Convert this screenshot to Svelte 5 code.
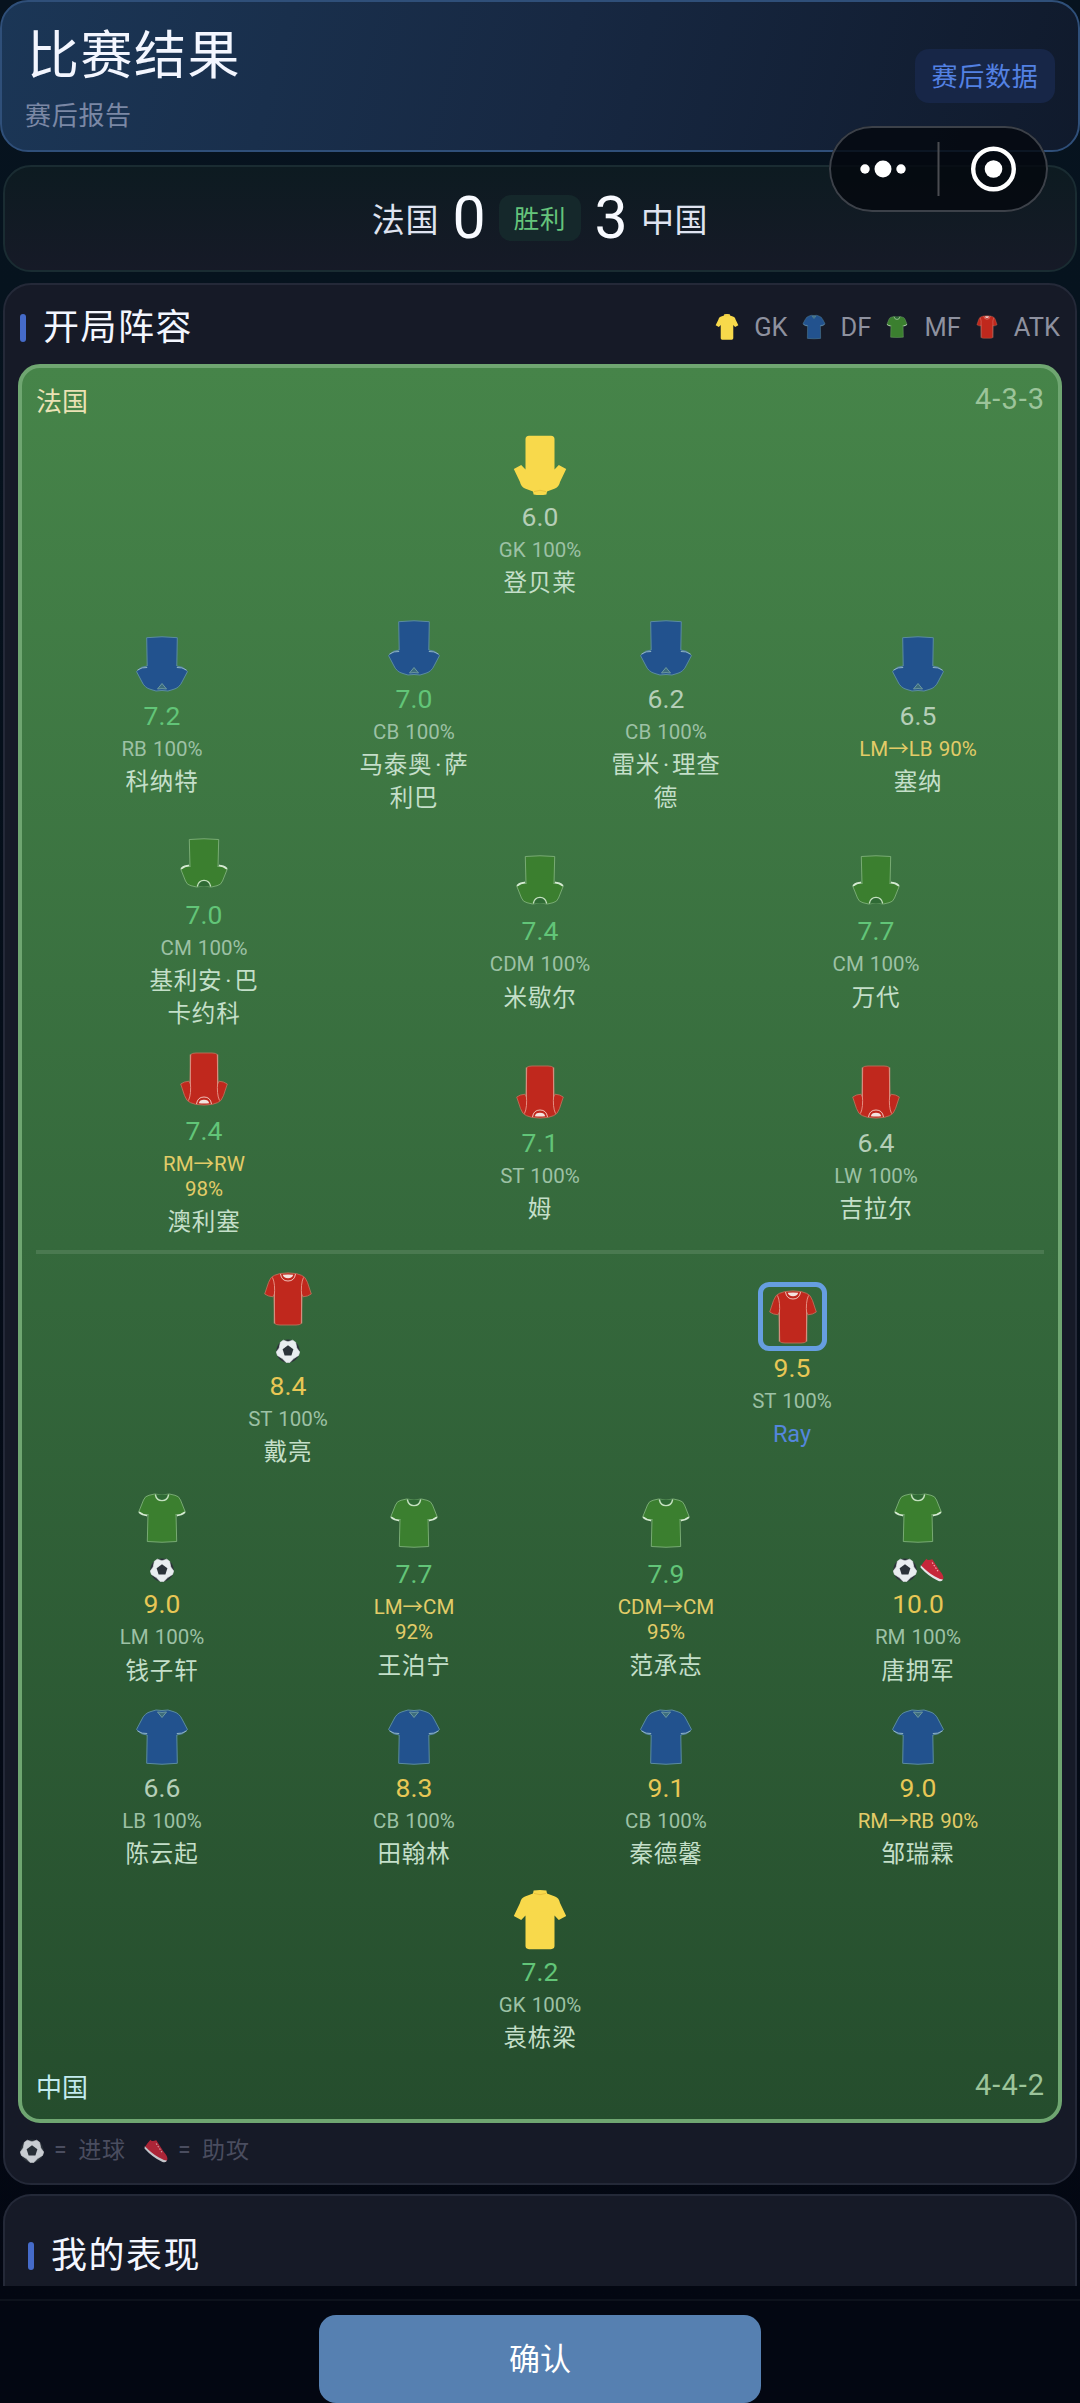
<script>
  const legend = [
    { kind: 'gk', label: 'GK' },
    { kind: 'df', label: 'DF' },
    { kind: 'mf', label: 'MF' },
    { kind: 'atk', label: 'ATK' }
  ];

  const p = (kind, score, pos, name, extra = {}) => ({ kind, score, pos: [].concat(pos), name: [].concat(name), ...extra });

  const away = [
    [p('gk', '6.0', 'GK 100%', '登贝莱')],
    [
      p('df', '7.2', 'RB 100%', '科纳特'),
      p('df', '7.0', 'CB 100%', ['马泰奥·萨', '利巴']),
      p('df', '6.2', 'CB 100%', ['雷米·理查', '德']),
      p('df', '6.5', 'LM→LB 90%', '塞纳')
    ],
    [
      p('mf', '7.0', 'CM 100%', ['基利安·巴', '卡约科']),
      p('mf', '7.4', 'CDM 100%', '米歇尔'),
      p('mf', '7.7', 'CM 100%', '万代')
    ],
    [
      p('atk', '7.4', ['RM→RW', '98%'], '澳利塞'),
      p('atk', '7.1', 'ST 100%', '姆'),
      p('atk', '6.4', 'LW 100%', '吉拉尔')
    ]
  ];

  const home = [
    [
      p('atk', '8.4', 'ST 100%', '戴亮', { events: ['goal'] }),
      p('atk', '9.5', 'ST 100%', 'Ray', { me: true })
    ],
    [
      p('mf', '9.0', 'LM 100%', '钱子轩', { events: ['goal'] }),
      p('mf', '7.7', ['LM→CM', '92%'], '王泊宁'),
      p('mf', '7.9', ['CDM→CM', '95%'], '范承志'),
      p('mf', '10.0', 'RM 100%', '唐拥军', { events: ['goal', 'assist'] })
    ],
    [
      p('df', '6.6', 'LB 100%', '陈云起'),
      p('df', '8.3', 'CB 100%', '田翰林'),
      p('df', '9.1', 'CB 100%', '秦德馨'),
      p('df', '9.0', 'RM→RB 90%', '邹瑞霖')
    ],
    [p('gk', '7.2', 'GK 100%', '袁栋梁')]
  ];

  const tone = (s) => (+s >= 8 ? 'gold' : +s >= 7 ? 'good' : 'plain');
  const moved = (pl) => pl.pos[0].includes('→');
</script>

{#snippet shirt(kind, flip)}
  <svg class="shirt" class:flip viewBox="0 0 60 60">
    {#if kind === 'gk'}
      <path d="M23.6 .6Q30-.4 36.4 .6L37 3.4L45 6.6Q49 8 50 13L56.2 26L48.8 30L44.5 25.5V56Q44.5 58.8 41 59.2H19Q15.5 58.8 15.5 56V25.5L11.2 30L3.8 26L10 13Q11 8 15 6.6L23 3.4Z" fill="#f8d94b" />
      <path d="M24 3.4Q30 6 36 3.4" fill="none" stroke="#e9c23c" stroke-width="1" />
    {:else if kind === 'df'}
      <path d="M24 3Q30 4 36 3L41 4.5Q47.500 6 50.500 13L55.500 22.500Q51 28 44.800 28L45.300 56.300Q30 58.200 14.700 56.300L15.200 28Q9 28 4.500 22.500L9.500 13Q12.500 6 19 4.500Z" fill="#22528e" stroke="#5b8ca0" stroke-width="1" stroke-linejoin="round" />
      <path d="M5.500 24Q10 27 15.200 26.500M54.500 24Q50 27 44.800 26.500" fill="none" stroke="#8fb3c4" stroke-width="1" />
      <path d="M25.500 5Q30 5.800 34.500 5L30 10.500Z" fill="#3d6d7c" stroke="#6d99a0" stroke-width="1" />
    {:else if kind === 'mf'}
      <path d="M22.500 6Q30 8 37.500 6L43 7.300Q47 8 48.500 12L53.300 24L45.300 28L44 26L44.700 53.500Q30 55 15.300 53.500L16 26L14.700 28L6.700 24L11.500 12Q13 8 17 7.300Z" fill="#3b7f2f" stroke="#7fb07b" stroke-width=".9" stroke-linejoin="round" />
      <path d="M7 24.200Q10.500 27.300 15 27.300M53 24.200Q49.500 27.300 45 27.300" fill="none" stroke="#d5ead2" stroke-width="1.700" />
      <path d="M23.300 6.500Q24.500 12.600 30 12.600T36.700 6.500" fill="#2f6a35" stroke="#c4e0bf" stroke-width="1.400" />
    {:else}
      <path d="M21.800 4.600Q30 3.200 38.200 4.600L43.500 6.300Q47.500 7.500 49.500 13.500L53.300 25Q50 27.500 45 27.800L43.900 25.500L43.200 54.500Q42 56 38 56H22Q18 56 16.800 54.500L16.100 25.500L15 27.800Q10 27.500 6.700 25L10.500 13.500Q12.500 7.500 16.500 6.300Z" fill="#c0281d" stroke="#b9705a" stroke-width=".9" stroke-linejoin="round" />
      <path d="M14.500 8.500Q17.500 15 16.300 27V54.500M45.500 8.500Q42.500 15 43.700 27V54.500" fill="none" stroke="#e79a8d" stroke-width=".9" />
      <path d="M22.500 5Q23.500 12 30 12T37.500 5" fill="#c0281d" stroke="#f0c0b8" stroke-width="1" />
      <path d="M24.800 5.800Q30 5 35.200 5.800Q34.500 9.200 30 9.200T24.800 5.800Z" fill="#f3e3df" />
    {/if}
  </svg>
{/snippet}

{#snippet badge(kind)}
  {#if kind === 'goal'}
    <svg class="event" viewBox="0 0 24 24">
      <circle cx="12" cy="12" r="11.600" fill="#2c333a" />
      <path d="M4.400 3.200L7.300 1.200L12 2.800L16.700 1.200L19.600 3.200L20.800 9L23.700 13L22.600 16.400L17.700 19.600L13.800 23.600H10.200L6.300 19.600L1.400 16.400L.3 13L3.200 9Z" fill="#e9edf0" stroke="#e9edf0" stroke-width=".6" stroke-linejoin="round" />
      <path d="M12 6.200L17.400 10.200L15.400 16.500H8.600L6.600 10.200Z" fill="#2c333a" />
    </svg>
  {:else}
    <svg class="event" viewBox="0 0 24 24">
      <path d="M3.500 4.300L6.500 .8Q7.500 2.600 9.200 1.900L12.300 1.200L19.500 12.500Q24 17.500 23.400 20.500Q22.500 23.600 18.500 22Q10.500 18.500 .9 8Z" fill="#c6273a" />
      <path d="M.8 7.200Q8 14.500 14.500 18.300Q19.500 21.300 22.900 21.600Q22.300 24 18.500 23Q8.500 18.500 .5 9.500Z" fill="#e3e5e8" />
      <path d="M12.200 4.500L18.800 14.500" stroke="#f0a9ae" stroke-width="1.300" stroke-dasharray="1.500 1.500" />
    </svg>
  {/if}
{/snippet}

{#snippet lineup(rows, flip)}
  {#each rows as row}
    <div class="row">
      {#each row as pl}
        <div class="player">
          <div class="kit" class:me={pl.me}>{@render shirt(pl.kind, flip)}</div>
          {#if pl.events}
            <div class="events">{#each pl.events as e}{@render badge(e)}{/each}</div>
          {/if}
          <div class="score {tone(pl.score)}">{pl.score}</div>
          <div class="pos" class:moved={moved(pl)}>{#each pl.pos as l}<span>{l}</span>{/each}</div>
          <div class="name" class:mine={pl.me}>{#each pl.name as l}<span>{#each l.split('·') as part, i}{#if i}<i>·</i>{/if}{part}{/each}</span>{/each}</div>
        </div>
      {/each}
    </div>
  {/each}
{/snippet}

<div class="page">
  <header>
    <div>
      <h1>比赛结果</h1>
      <p>赛后报告</p>
    </div>
    <span class="tag">赛后数据</span>
  </header>

  <div class="capsule">
    <svg viewBox="0 0 219 86">
      <g fill="#fff">
        <circle cx="36" cy="43" r="4.700" />
        <circle cx="54" cy="43" r="8.500" />
        <circle cx="72" cy="43" r="4.700" />
        <circle cx="164.500" cy="43" r="8.800" />
      </g>
      <circle cx="164.500" cy="43" r="20.300" fill="none" stroke="#fff" stroke-width="4.400" />
      <path d="M109.500 16V70" stroke="#4a4c51" stroke-width="2" />
    </svg>
  </div>

  <section class="result">
    <span class="team">法国</span>
    <span class="num">0</span>
    <span class="win">胜利</span>
    <span class="num">3</span>
    <span class="team">中国</span>
  </section>

  <section class="card">
    <div class="cardhead">
      <h2>开局阵容</h2>
      <div class="legend">
        {#each legend as l}
          <span class="key">{@render shirt(l.kind, false)}{l.label}</span>
        {/each}
      </div>
    </div>
    <div class="pitch">
      <div class="side"><span class="away">法国</span><span class="form">4-3-3</span></div>
      <div class="half top">{@render lineup(away, true)}</div>
      <div class="midline"></div>
      <div class="half">{@render lineup(home, false)}</div>
      <div class="side"><span class="home">中国</span><span class="form">4-4-2</span></div>
    </div>
    <div class="notes">
      <span>{@render badge('goal')}= 进球</span>
      <span>{@render badge('assist')}= 助攻</span>
    </div>
  </section>

  <section class="card mycard">
    <h2>我的表现</h2>
  </section>

  <footer><button>确认</button></footer>
</div>

<style>
  :global(body) { margin: 0; background: #040811; }
  .page {
    position: relative;
    width: 1080px;
    height: 2403px;
    overflow: hidden;
    display: flex;
    flex-direction: column;
    background: linear-gradient(180deg, #07131f 0, #06131e 300px, #050d18 1200px, #030712 2300px);
    font-family: Roboto, "Noto Sans CJK SC", sans-serif;
    font-weight: 400;
    color: #f3f6ff;
  }
  * { box-sizing: border-box; }
  h1, h2, p { margin: 0; font-weight: inherit; }
  header {
    flex: none;
    height: 152px;
    padding: 22px 25px 0;
    display: flex;
    justify-content: space-between;
    border: 2px solid #2f4f79;
    border-radius: 28px;
    background: linear-gradient(105deg, #1b3656 0%, #172842 52%, #101a2c 100%);
  }
  h1 { font-size: 52px; line-height: 66px; letter-spacing: 1.500px; }
  header p { margin: 9px 0 0 -2px; font-size: 26px; line-height: 34px; letter-spacing: .7px; color: #7b88a5; }
  .tag {
    margin: 25px -2px 0 0;
    width: 140px;
    height: 54px;
    padding-bottom: 3px;
    display: grid;
    place-items: center;
    border-radius: 14px;
    background: #172647;
    color: #5381e3;
    font-size: 26px;
    letter-spacing: .7px;
  }
  .capsule {
    position: absolute;
    left: 829px;
    top: 126px;
    width: 219px;
    height: 86px;
    border-radius: 43px;
    background: rgba(4, 7, 14, .8);
    box-shadow: inset 0 0 0 2px #3c4149;
  }
  .capsule svg { display: block; }
  .result {
    flex: none;
    margin: 13px 3px 0;
    height: 107px;
    padding-bottom: 2px;
    display: flex;
    align-items: center;
    justify-content: center;
    border: 2px solid #1a2c32;
    border-radius: 28px;
    background: linear-gradient(180deg, #0d1b21, #161a27);
    color: #dfe3f0;
  }
  .team { font-size: 33px; letter-spacing: .6px; }
  .num { width: 60px; text-align: center; font-size: 59px; color: #f8faff; }
  .win {
    width: 82px;
    height: 46px;
    padding-bottom: 2px;
    display: grid;
    place-items: center;
    border-radius: 12px;
    background: #15282b;
    color: #65c47c;
    font-size: 25.500px;
    letter-spacing: .7px;
  }
  .card {
    flex: none;
    margin: 11px 3px 0;
    height: 1902px;
    padding: 0 13px;
    border: 2px solid #242938;
    border-radius: 28px;
    background: #161a27;
  }
  .cardhead {
    height: 79px;
    padding: 6px 2px 0;
    display: flex;
    align-items: center;
    justify-content: space-between;
  }
  h2 {
    display: flex;
    align-items: center;
    gap: 17px;
    font-size: 36px;
    line-height: 48px;
    letter-spacing: 1.500px;
  }
  h2::before { content: ''; width: 6px; height: 28px; border-radius: 3px; background: #456bc9; }
  .legend { display: flex; gap: 12px; margin-top: -2px; font-size: 25.500px; color: #8e919f; }
  .key { display: flex; align-items: center; gap: 13px; }
  .key .shirt { width: 26px; height: 26px; margin: 0 1px; }
  .pitch {
    height: 1759px;
    padding: 0 14px;
    border: 4px solid #6fa671;
    border-radius: 22px;
    background: linear-gradient(180deg, #468449 0%, #35693c 50%, #254d2d 100%);
  }
  .side {
    height: 62.500px;
    display: flex;
    align-items: center;
    justify-content: space-between;
    font-size: 26px;
  }
  .side .form { font-size: 29px; letter-spacing: 1px; margin-right: -1px; color: #9cc49a; }
  .away { color: #ebe2b5; }
  .home { color: #c2ebee; }
  .half { display: flex; flex-direction: column; gap: 14.500px; }
  .half.top { gap: 13.500px; }
  .row { display: flex; align-items: center; }
  .player { flex: 1; display: flex; flex-direction: column; align-items: center; }
  .kit { width: 69px; height: 69px; display: grid; place-items: center; }
  .kit.me { border: 5px solid #669ee0; border-radius: 11px; }
  .shirt { width: 60px; height: 60px; display: block; }
  .flip { transform: scaleY(-1); }
  .events { height: 35px; display: flex; gap: 3px; align-items: center; }
  .event { width: 24px; height: 24px; display: block; }
  .score { margin-top: 1px; font-size: 26.500px; line-height: 32px; }
  .plain { color: #b5ceb7; }
  .good { color: #62c578; }
  .gold { color: #e8c755; }
  .pos { margin-top: 5px; font-size: 20.500px; line-height: 25px; word-spacing: 1px; text-align: center; color: #9dc1a5; }
  .pos.moved { color: #e2cc68; }
  .pos span, .name span { display: block; white-space: nowrap; }
  .name { margin-top: 4.200px; font-size: 23.500px; line-height: 33px; letter-spacing: .8px; text-align: center; color: #c4dfc9; }
  .name i { display: inline-block; width: 12px; text-align: center; font-style: normal; letter-spacing: 0; }
  .name.mine { color: #5486dc; letter-spacing: 0; }
  .midline { height: 4px; margin: 11px 0 11px; background: #4a7950; }
  .half + .side { margin-top: 0; height: 60px; }
  .notes { display: flex; gap: 18px; padding: 11px 2px 0; font-size: 23px; line-height: 34px; letter-spacing: .9px; word-spacing: 4px; color: #4a4d5f; }
  .notes span { display: flex; align-items: center; gap: 10px; }
  .notes .event { opacity: .85; }
  .mycard {
    margin-top: 9px;
    height: 92px;
    padding: 36px 0 0 23px;
    border-bottom: 0;
    border-radius: 28px 28px 0 0;
  }
  footer {
    flex: none;
    margin-top: 13px;
    padding-top: 14px;
    display: flex;
    justify-content: center;
    border-top: 2px solid #0d121c;
  }
  button {
    width: 442px;
    height: 88px;
    padding: 0 0 5px;
    border: 0;
    border-radius: 17px;
    background: #5680b1;
    color: #fff;
    font: inherit;
    font-size: 31px;
  }
</style>
